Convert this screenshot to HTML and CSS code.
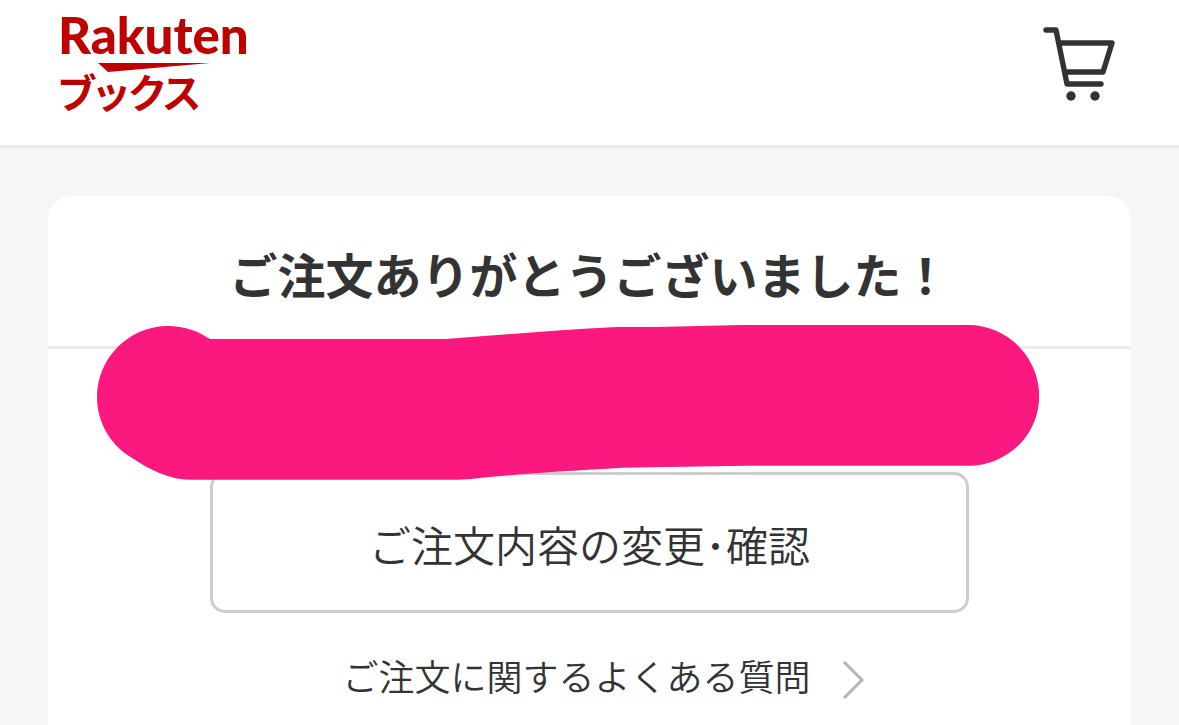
FILE: index.html
```
<!DOCTYPE html>
<html lang="ja">
<head>
  <meta charset="UTF-8">
  <meta name="viewport" content="width=device-width, initial-scale=1.0">
  <title>ご注文完了 - Rakutenブックス</title>
  <link rel="stylesheet" href="styles.css">
</head>
<body>

  <!-- ヘッダー -->
  <header class="header">
    <a class="logo" href="#">
      <span class="logo-name">Rakuten</span>
      <svg class="logo-mark" width="112" height="12" viewBox="0 0 112 12" aria-hidden="true">
        <path d="M0 3H112L10 12Z" fill="#bf0000"/>
      </svg>
      <span class="logo-service">ブックス</span>
    </a>
    <a class="cart" href="#" aria-label="買い物かご">
      <svg width="72" height="76" viewBox="0 0 72 76" fill="none" stroke="#333" stroke-width="5.4" stroke-linecap="round" stroke-linejoin="round">
        <path d="M3 4H13L24 58H58M16 17H69L60 46H22"/>
        <circle cx="28" cy="70" r="4.7" fill="#333" stroke="none"/>
        <circle cx="52" cy="70" r="4.7" fill="#333" stroke="none"/>
      </svg>
    </a>
  </header>

  <!-- 注文完了 -->
  <main class="main">
    <section class="card">
      <h1 class="card-title">ご注文ありがとうございました！</h1>
      <div class="card-body">
        <button class="order-btn" type="button">ご注文内容の変更･確認</button>
        <a class="faq-link" href="#">
          <span>ご注文に関するよくある質問</span>
          <svg width="22" height="38" viewBox="0 0 22 38" fill="none" stroke="#b5b5b5" stroke-width="3" aria-hidden="true">
            <path d="M1 1L19 19L1 37"/>
          </svg>
        </a>
      </div>
      <!-- 注文番号の目隠し -->
      <svg class="mask" viewBox="0 0 943 156" aria-hidden="true">
        <path d="M71 1C87 1 101 6 113 14H349C405 10 460 5 520 2L560 2L645 0H872C911 0 943 32 943 71S911 141 872 141H650L525 143C475 146 425 149 385 153C370 155 360 155 349 155H96C72 155 53 145 32 131C12 118 0 96 0 72C0 33 32 1 71 1Z" fill="#fb187f"/>
      </svg>
    </section>
  </main>

</body>
</html>
```
FILE: styles.css
```
* {
    box-sizing: border-box;
}

body {
    margin: 0;
    min-height: 100vh;
    display: flex;
    flex-direction: column;
    background: #f6f6f6;
    color: #333;
    font-family: "Noto Sans CJK JP", sans-serif;
    font-weight: 350;
    overflow-x: hidden;
}

a {
    color: inherit;
    text-decoration: none;
}

/* ヘッダー */
.header {
    display: flex;
    justify-content: space-between;
    align-items: flex-start;
    padding: 10px 64px 34px 58px;
    background: #fff;
    border-bottom: 3px solid #ebebeb;
}

.logo {
    display: flex;
    flex-direction: column;
    color: #bf0000;
    font-weight: 700;
}

.logo-name {
    font-family: Lato, sans-serif;
    font-size: 51px;
    font-weight: 900;
    line-height: 50px;
}

.logo-mark {
    margin-left: 40px;
}

.logo-service {
    font-size: 40px;
    line-height: 39px;
    font-feature-settings: "palt";
}

.cart {
    display: flex;
    padding-top: 16px;
}

/* カード */
.main {
    flex: 1;
    display: flex;
    flex-direction: column;
    padding: 48px 48px 0;
}

.card {
    position: relative;
    flex: 1;
    background: #fff;
    border-radius: 24px 24px 0 0;
}

.card-title {
    margin: 0;
    padding: 41px 24px 37px;
    border-bottom: 3px solid #ebebeb;
    font-size: 48px;
    font-weight: 700;
    line-height: 72px;
    text-align: center;
}

.card-body {
    display: flex;
    flex-direction: column;
    align-items: center;
    padding: 123px 0 16px;
}

.order-btn {
    width: 70%;
    padding: 37px 0 35px;
    background: #fff;
    border: 3px solid #ccc;
    border-radius: 15px;
    color: inherit;
    font: inherit;
    font-size: 42px;
    line-height: 63px;
    cursor: pointer;
}

.faq-link {
    display: flex;
    align-items: flex-end;
    gap: 32px;
    margin-top: 38px;
    padding-left: 28px;
    font-size: 36px;
    line-height: 48px;
}

/* 目隠し */
.mask {
    position: absolute;
    top: 129px;
    left: 49px;
    width: 87%;
}
```
